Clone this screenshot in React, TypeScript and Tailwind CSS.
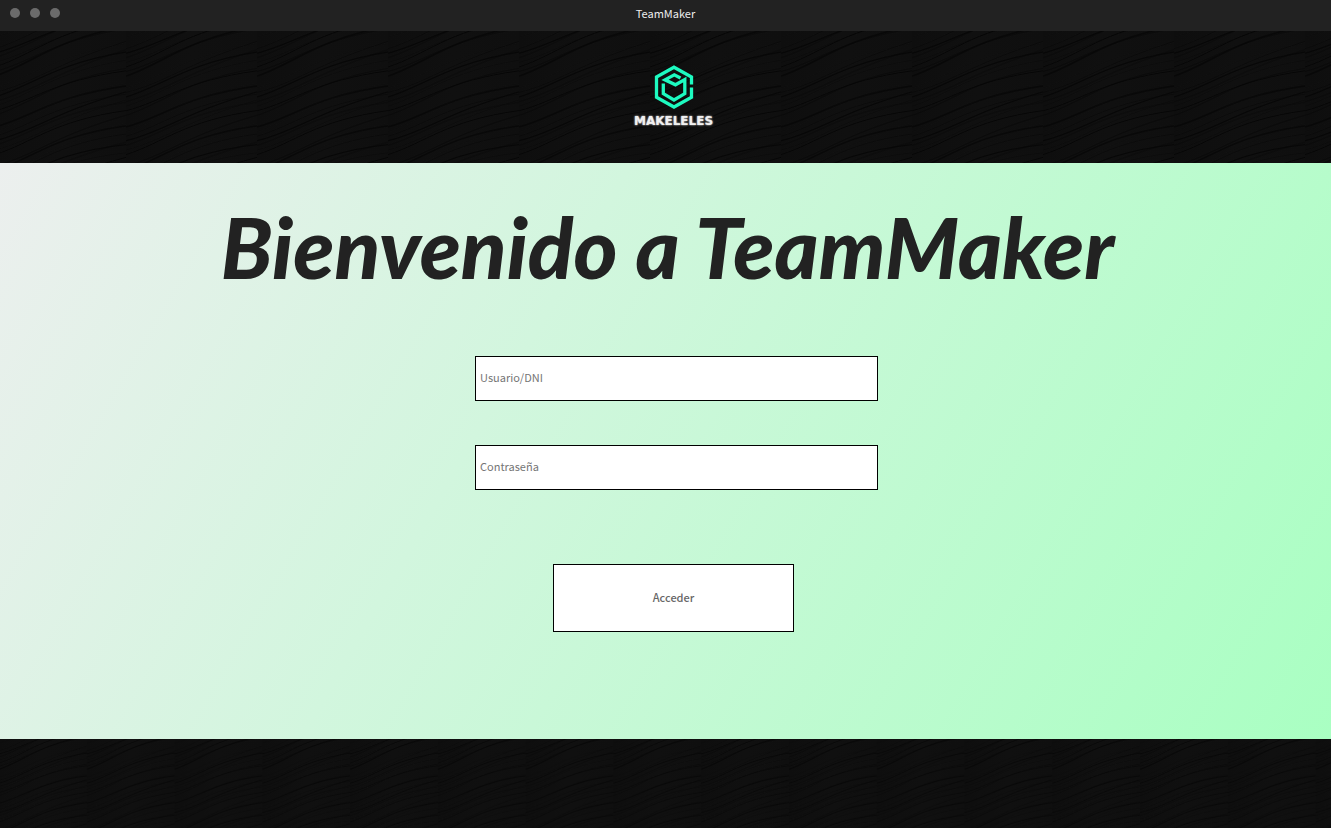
import { useId } from 'react';

const strands = Array.from({ length: 34 }, (_, i) => {
  const y = i * 5.6 + ((i * 13) % 7) - 10;
  const lift = 34 + ((i * 7) % 13);
  const mid = 2 + ((i * 5) % 9);
  return {
    d: `M0 ${y + 16} C 38 ${y + 8 - mid / 2}, 58 ${y - mid - 10}, 131 ${y - lift + 10}`,
    opacity: 0.25 + ((i * 3) % 8) * 0.09,
    width: 0.6 + ((i * 5) % 4) * 0.4,
  };
});

function Texture({ scale, shift }: { scale: number; shift: number }) {
  const id = useId();
  return (
    <svg aria-hidden="true" className="absolute inset-0 h-full w-full">
      <defs>
        <linearGradient id={`${id}-shade`}>
          <stop offset="0" stopColor="#0e0e0e" />
          <stop offset="0.5" stopColor="#101010" />
          <stop offset="1" stopColor="#0f0f0f" />
        </linearGradient>
        <pattern id={id} width={131} height={134} patternUnits="userSpaceOnUse" patternTransform={`translate(${shift} 0) scale(${scale})`}>
          <rect width={131} height={134} fill={`url(#${id}-shade)`} />
          {strands.map((s, i) => (
            <path key={i} d={s.d} fill="none" stroke="#050505" strokeOpacity={s.opacity} strokeWidth={s.width} />
          ))}
        </pattern>
      </defs>
      <rect width="100%" height="100%" fill={`url(#${id})`} />
    </svg>
  );
}

function Logo() {
  return (
    <div className="relative flex flex-col items-center gap-1">
      <svg aria-hidden="true" viewBox="0 0 40 44" className="h-11 w-10" fill="none" stroke="#1dfac0" strokeWidth="3.3">
        <path d="M37.5 19.5V12L20 2.2 2.5 12V32.2L20 42 37.5 32.2V22.5" />
        <path d="M9.3 18.5V28.6L20 35 30.8 28.6V14.5L21.5 19.8 11 14.8 20.3 9.8 26.5 13" />
      </svg>
      <span className="font-['DejaVu_Sans',sans-serif] text-xs leading-4 font-bold text-[#f0f0f0] [text-shadow:0_0_2px_#ffffff]">MAKELELES</span>
    </div>
  );
}

export default function App() {
  return (
    <div className="flex min-h-screen flex-col bg-[#101010] font-['Noto_Sans_CJK_SC',sans-serif] text-[11px]">
      <div className="relative flex h-[31px] items-center justify-center bg-[#222222] text-[#eeeeee]">
        <div className="absolute top-2 left-[10px] flex gap-[10px]">
          <span className="size-[10px] rounded-full bg-[#6b6b6b]" />
          <span className="size-[10px] rounded-full bg-[#6b6b6b]" />
          <span className="size-[10px] rounded-full bg-[#6b6b6b]" />
        </div>
        <span className="pb-1">TeamMaker</span>
      </div>
      <header className="relative flex h-[132px] items-center justify-center pl-4">
        <Texture scale={1} shift={-5} />
        <Logo />
      </header>
      <main className="flex grow flex-col items-center bg-[linear-gradient(120deg,#ecefee_0%,#d2f6de_38%,#a9ffc2_100%)] pb-[107px]">
        <h1 className="pt-6 pb-1 pl-1 text-center font-['Lato',cursive] text-[84px] leading-[120px] font-black text-[#222222] italic">Bienvenido a TeamMaker</h1>
        <form className="flex w-full flex-col items-center pt-[45px]" onSubmit={(e) => e.preventDefault()}>
          <div className="flex w-full flex-col items-center gap-11 pl-[22px]">
            <input aria-label="Usuario/DNI" placeholder="Usuario/DNI" className="h-[45px] w-[403px] max-w-full border border-black bg-white px-1 pb-1 placeholder:text-[#757575]" />
            <input aria-label="Contraseña" type="password" placeholder="Contraseña" className="h-[45px] w-[403px] max-w-full border border-black bg-white px-1 pb-1 placeholder:text-[#757575]" />
          </div>
          <div className="flex w-full justify-center pt-[74px] pl-4">
            <button type="submit" className="h-[68px] w-[241px] border border-black bg-white pb-[2px] font-medium text-[#666666]">Acceder</button>
          </div>
        </form>
      </main>
      <footer className="relative h-[89px]">
        <Texture scale={0.67} shift={-1} />
      </footer>
    </div>
  );
}
